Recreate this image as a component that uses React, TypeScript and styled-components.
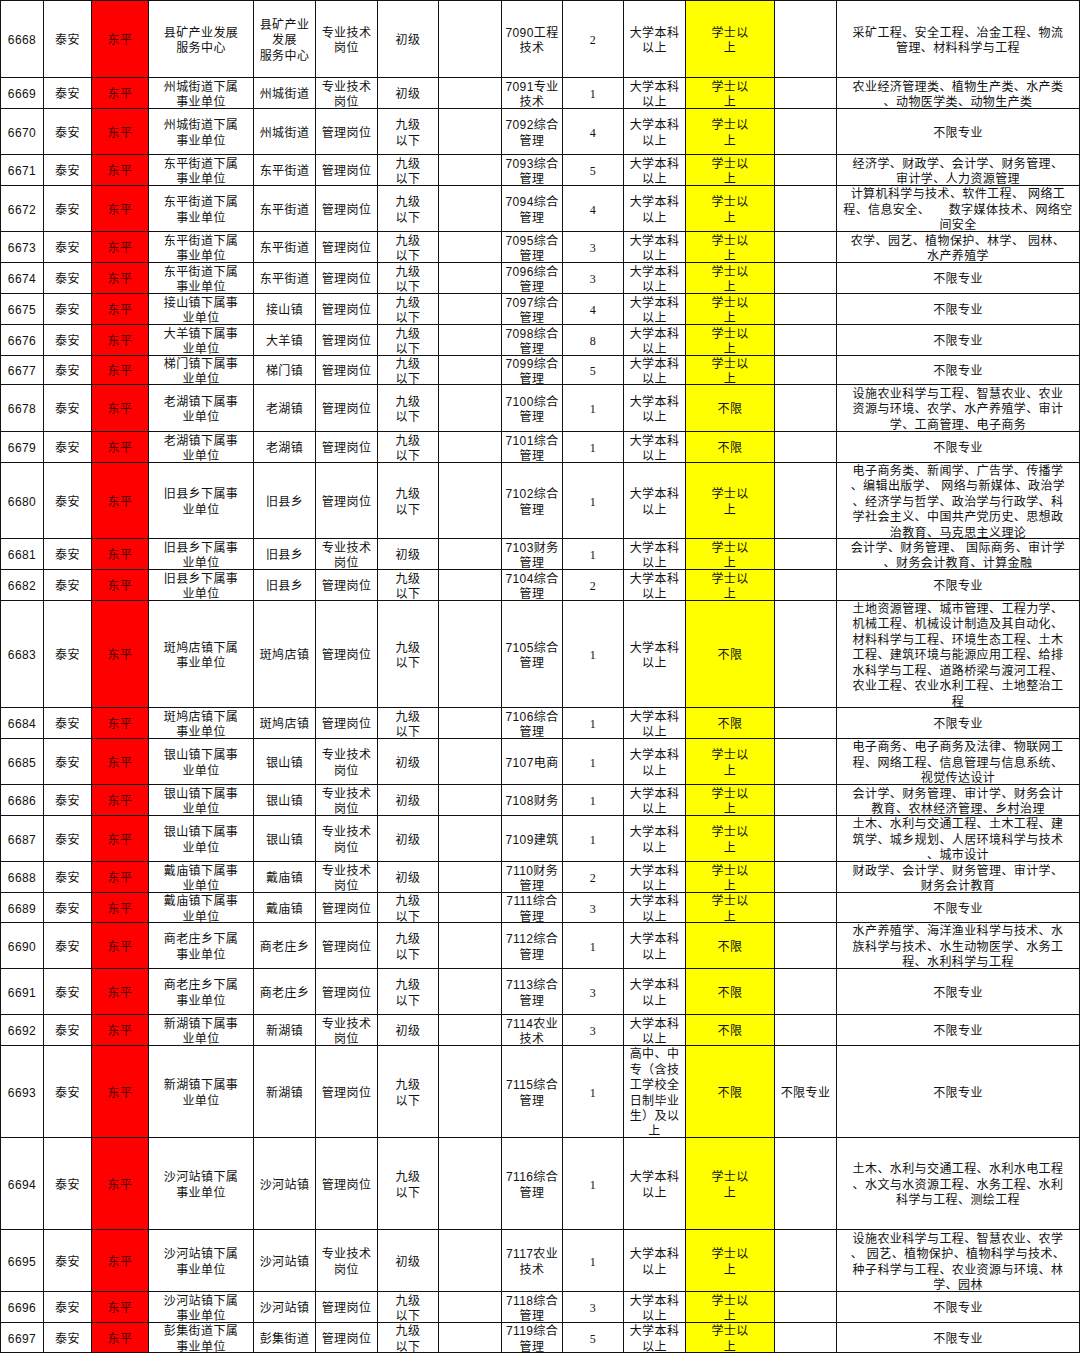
import React from "react";
import styled, { createGlobalStyle } from "styled-components";

const GlobalStyle = createGlobalStyle`
  html, body { margin: 0; padding: 0; background: #ffffff; }
  body { font-family: "Liberation Sans", "Noto Sans CJK SC", sans-serif; }
`;

const COLS = "43px 48px 57px 105px 62px 62px 61px 63px 61px 61px 62px 89px 62px 243px";

const Sheet = styled.div`
  width: 1080px;
  box-sizing: border-box;
  border-top: 1px solid #111;
  border-left: 1px solid #111;
  display: flex;
  flex-direction: column;
`;

const Row = styled.div<{ $h: number }>`
  display: grid;
  grid-template-columns: ${COLS};
  height: ${(p) => p.$h}px;
`;

type Kind = "plain" | "red" | "yellow" | "serif";

const Cell = styled.div<{ $kind: Kind }>`
  box-sizing: border-box;
  border-right: 1px solid #111;
  border-bottom: 1px solid #111;
  padding-top: 4px;
  display: flex;
  align-items: center;
  justify-content: center;
  text-align: center;
  overflow: hidden;
  white-space: pre;
  font-family: ${(p) =>
    p.$kind === "serif"
      ? '"Liberation Serif", "Noto Sans CJK SC", serif'
      : '"Liberation Sans", "Noto Sans CJK SC", sans-serif'};
  font-size: 12px;
  letter-spacing: 0.4px;
  line-height: 15.4px;
  color: ${(p) => (p.$kind === "red" ? "#4d0000" : "#111")};
  background: ${(p) =>
    p.$kind === "red" ? "#ff0000" : p.$kind === "yellow" ? "#ffff00" : "#ffffff"};
`;

type R = {
  id: string;
  h: number;
  unit: string;
  dept: string;
  post: string;
  level: string;
  code: string;
  n: string;
  edu?: string;
  deg: string;
  m13?: string;
  major: string;
};

const BK = "大学本科\n以上";
const XS = "学士以\n上";
const BX = "不限";
const ZY = "不限专业";
const GL = "管理岗位";
const ZJ = "专业技术\n岗位";
const JJ = "九级\n以下";
const CJ = "初级";

const rows: R[] = [
  { id: "6668", h: 77, unit: "县矿产业发展\n服务中心", dept: "县矿产业\n发展\n服务中心", post: ZJ, level: CJ, code: "7090工程\n技术", n: "2", deg: XS, major: "采矿工程、安全工程、冶金工程、物流\n管理、材料科学与工程" },
  { id: "6669", h: 31, unit: "州城街道下属\n事业单位", dept: "州城街道", post: ZJ, level: CJ, code: "7091专业\n技术", n: "1", deg: XS, major: "农业经济管理类、植物生产类、水产类\n、动物医学类、动物生产类" },
  { id: "6670", h: 46, unit: "州城街道下属\n事业单位", dept: "州城街道", post: GL, level: JJ, code: "7092综合\n管理", n: "4", deg: XS, major: ZY },
  { id: "6671", h: 31, unit: "东平街道下属\n事业单位", dept: "东平街道", post: GL, level: JJ, code: "7093综合\n管理", n: "5", deg: XS, major: "经济学、财政学、会计学、财务管理、\n审计学、人力资源管理" },
  { id: "6672", h: 46, unit: "东平街道下属\n事业单位", dept: "东平街道", post: GL, level: JJ, code: "7094综合\n管理", n: "4", deg: XS, major: "计算机科学与技术、软件工程、 网络工\n程、信息安全、     数字媒体技术、网络空\n间安全" },
  { id: "6673", h: 31, unit: "东平街道下属\n事业单位", dept: "东平街道", post: GL, level: JJ, code: "7095综合\n管理", n: "3", deg: XS, major: "农学、园艺、植物保护、林学、 园林、\n水产养殖学" },
  { id: "6674", h: 31, unit: "东平街道下属\n事业单位", dept: "东平街道", post: GL, level: JJ, code: "7096综合\n管理", n: "3", deg: XS, major: ZY },
  { id: "6675", h: 31, unit: "接山镇下属事\n业单位", dept: "接山镇", post: GL, level: JJ, code: "7097综合\n管理", n: "4", deg: XS, major: ZY },
  { id: "6676", h: 31, unit: "大羊镇下属事\n业单位", dept: "大羊镇", post: GL, level: JJ, code: "7098综合\n管理", n: "8", deg: XS, major: ZY },
  { id: "6677", h: 29, unit: "梯门镇下属事\n业单位", dept: "梯门镇", post: GL, level: JJ, code: "7099综合\n管理", n: "5", deg: XS, major: ZY },
  { id: "6678", h: 47, unit: "老湖镇下属事\n业单位", dept: "老湖镇", post: GL, level: JJ, code: "7100综合\n管理", n: "1", deg: BX, major: "设施农业科学与工程、智慧农业、农业\n资源与环境、农学、水产养殖学、审计\n学、工商管理、电子商务" },
  { id: "6679", h: 31, unit: "老湖镇下属事\n业单位", dept: "老湖镇", post: GL, level: JJ, code: "7101综合\n管理", n: "1", deg: BX, major: ZY },
  { id: "6680", h: 76, unit: "旧县乡下属事\n业单位", dept: "旧县乡", post: GL, level: JJ, code: "7102综合\n管理", n: "1", deg: XS, major: "电子商务类、新闻学、广告学、传播学\n、编辑出版学、 网络与新媒体、政治学\n、经济学与哲学、政治学与行政学、科\n学社会主义、中国共产党历史、思想政\n治教育、马克思主义理论" },
  { id: "6681", h: 31, unit: "旧县乡下属事\n业单位", dept: "旧县乡", post: ZJ, level: CJ, code: "7103财务\n管理", n: "1", deg: XS, major: "会计学、财务管理、 国际商务、审计学\n、财务会计教育、计算金融" },
  { id: "6682", h: 31, unit: "旧县乡下属事\n业单位", dept: "旧县乡", post: GL, level: JJ, code: "7104综合\n管理", n: "2", deg: XS, major: ZY },
  { id: "6683", h: 107, unit: "斑鸠店镇下属\n事业单位", dept: "斑鸠店镇", post: GL, level: JJ, code: "7105综合\n管理", n: "1", deg: BX, major: "土地资源管理、城市管理、工程力学、\n机械工程、机械设计制造及其自动化、\n材料科学与工程、环境生态工程、土木\n工程、建筑环境与能源应用工程、给排\n水科学与工程、道路桥梁与渡河工程、\n农业工程、农业水利工程、土地整治工\n程" },
  { id: "6684", h: 31, unit: "斑鸠店镇下属\n事业单位", dept: "斑鸠店镇", post: GL, level: JJ, code: "7106综合\n管理", n: "1", deg: BX, major: ZY },
  { id: "6685", h: 46, unit: "银山镇下属事\n业单位", dept: "银山镇", post: ZJ, level: CJ, code: "7107电商", n: "1", deg: XS, major: "电子商务、电子商务及法律、物联网工\n程、网络工程、信息管理与信息系统、\n视觉传达设计" },
  { id: "6686", h: 31, unit: "银山镇下属事\n业单位", dept: "银山镇", post: ZJ, level: CJ, code: "7108财务", n: "1", deg: XS, major: "会计学、财务管理、审计学、财务会计\n教育、农林经济管理、乡村治理" },
  { id: "6687", h: 46, unit: "银山镇下属事\n业单位", dept: "银山镇", post: ZJ, level: CJ, code: "7109建筑", n: "1", deg: XS, major: "土木、水利与交通工程、土木工程、建\n筑学、城乡规划、人居环境科学与技术\n、城市设计" },
  { id: "6688", h: 31, unit: "戴庙镇下属事\n业单位", dept: "戴庙镇", post: ZJ, level: CJ, code: "7110财务\n管理", n: "2", deg: XS, major: "财政学、会计学、财务管理、审计学、\n财务会计教育" },
  { id: "6689", h: 30, unit: "戴庙镇下属事\n业单位", dept: "戴庙镇", post: GL, level: JJ, code: "7111综合\n管理", n: "3", deg: XS, major: ZY },
  { id: "6690", h: 46, unit: "商老庄乡下属\n事业单位", dept: "商老庄乡", post: GL, level: JJ, code: "7112综合\n管理", n: "1", deg: BX, major: "水产养殖学、海洋渔业科学与技术、水\n族科学与技术、水生动物医学、水务工\n程、水利科学与工程" },
  { id: "6691", h: 46, unit: "商老庄乡下属\n事业单位", dept: "商老庄乡", post: GL, level: JJ, code: "7113综合\n管理", n: "3", deg: BX, major: ZY },
  { id: "6692", h: 31, unit: "新湖镇下属事\n业单位", dept: "新湖镇", post: ZJ, level: CJ, code: "7114农业\n技术", n: "3", deg: BX, major: ZY },
  { id: "6693", h: 92, unit: "新湖镇下属事\n业单位", dept: "新湖镇", post: GL, level: JJ, code: "7115综合\n管理", n: "1", edu: "高中、中\n专（含技\n工学校全\n日制毕业\n生）及以\n上", deg: BX, m13: ZY, major: ZY },
  { id: "6694", h: 92, unit: "沙河站镇下属\n事业单位", dept: "沙河站镇", post: GL, level: JJ, code: "7116综合\n管理", n: "1", deg: XS, major: "土木、水利与交通工程、水利水电工程\n、水文与水资源工程、水务工程、水利\n科学与工程、测绘工程" },
  { id: "6695", h: 62, unit: "沙河站镇下属\n事业单位", dept: "沙河站镇", post: ZJ, level: CJ, code: "7117农业\n技术", n: "1", deg: XS, major: "设施农业科学与工程、智慧农业、农学\n、 园艺、植物保护、植物科学与技术、\n种子科学与工程、农业资源与环境、林\n学、园林" },
  { id: "6696", h: 31, unit: "沙河站镇下属\n事业单位", dept: "沙河站镇", post: GL, level: JJ, code: "7118综合\n管理", n: "3", deg: XS, major: ZY },
  { id: "6697", h: 30, unit: "彭集街道下属\n事业单位", dept: "彭集街道", post: GL, level: JJ, code: "7119综合\n管理", n: "5", deg: XS, major: ZY },
];

export default function App() {
  return (
    <>
      <GlobalStyle />
      <Sheet>
        {rows.map((r) => (
          <Row key={r.id} $h={r.h}>
            <Cell $kind="plain">{r.id}</Cell>
            <Cell $kind="plain">泰安</Cell>
            <Cell $kind="red">东平</Cell>
            <Cell $kind="plain">{r.unit}</Cell>
            <Cell $kind="plain">{r.dept}</Cell>
            <Cell $kind="plain">{r.post}</Cell>
            <Cell $kind="plain">{r.level}</Cell>
            <Cell $kind="plain" />
            <Cell $kind="plain">{r.code}</Cell>
            <Cell $kind="serif">{r.n}</Cell>
            <Cell $kind="plain">{r.edu ?? BK}</Cell>
            <Cell $kind="yellow">{r.deg}</Cell>
            <Cell $kind="plain">{r.m13 ?? ""}</Cell>
            <Cell $kind="plain">{r.major}</Cell>
          </Row>
        ))}
      </Sheet>
    </>
  );
}
